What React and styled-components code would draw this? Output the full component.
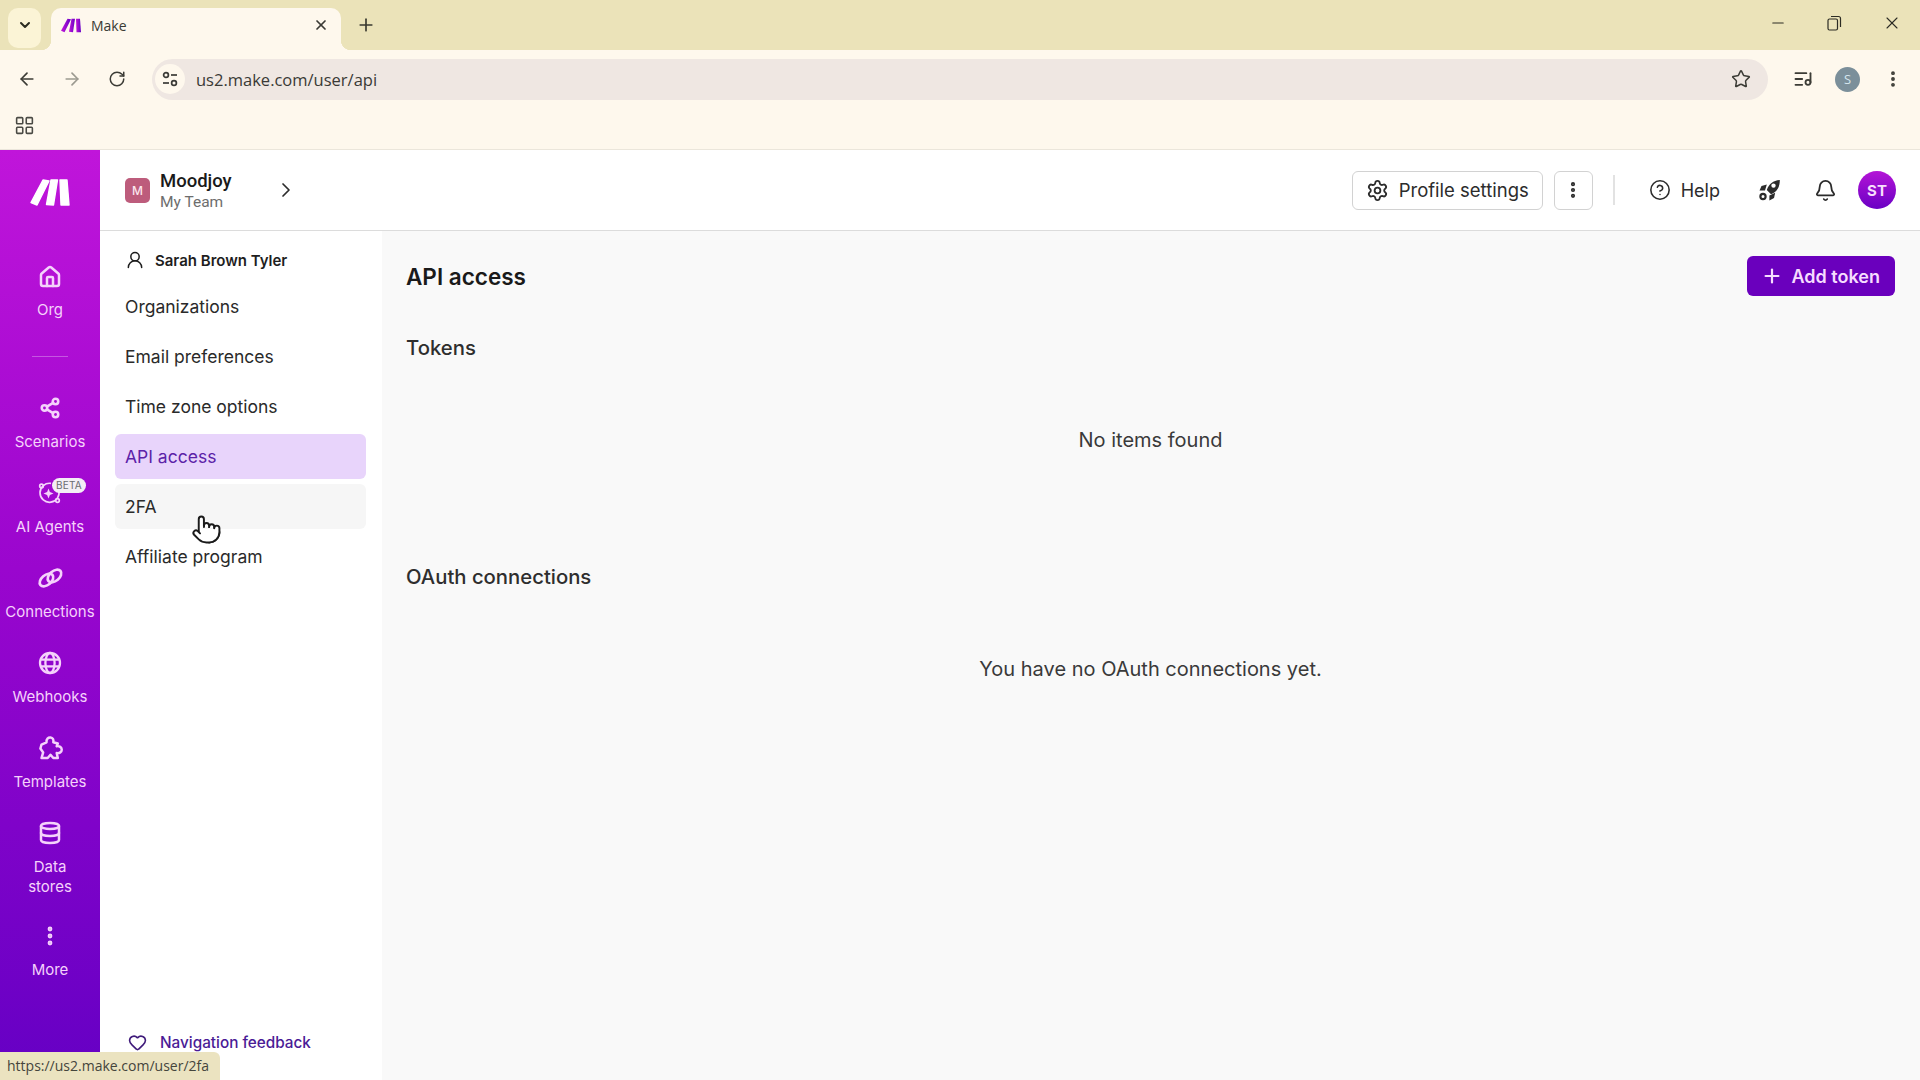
import React from 'react'
import styled, { createGlobalStyle } from 'styled-components'
import {
  ArrowLeft,
  ArrowRight,
  Bell,
  ChevronDown,
  ChevronRight,
  CircleHelp,
  Database,
  EllipsisVertical,
  Heart,
  House,
  LayoutGrid,
  ListMusic,
  Minus,
  Plus,
  Pointer,
  RotateCw,
  Settings,
  Share2,
  Star,
  UserRound,
  X,
} from 'lucide-react'

const GlobalStyle = createGlobalStyle`
  html, body {
    margin: 0;
    padding: 0;
    background: #fff;
  }
  body {
    font-family: Inter, "Liberation Sans", sans-serif;
    color: #1c1c1c;
  }
  * {
    box-sizing: border-box;
  }
`

const Screen = styled.div`
  position: relative;
  display: flex;
  flex-direction: column;
  width: 100%;
  height: 100vh;
  overflow: hidden;
`

const TabStrip = styled.div`
  display: flex;
  flex: none;
  height: 50px;
  padding-left: 8px;
  background: #ebe3b9;
`

const TabListButton = styled.div`
  display: flex;
  align-items: center;
  justify-content: center;
  width: 33px;
  height: 40px;
  margin-top: 8px;
  padding-bottom: 6px;
  border-radius: 10px;
  background: #fbf4d6;
  color: #2b2b20;
`

const Tab = styled.div`
  position: relative;
  display: flex;
  align-items: center;
  width: 290px;
  height: 42px;
  margin: 8px 0 0 10px;
  padding: 0 12px 8px 10px;
  border-radius: 10px 10px 0 0;
  background: #fef8ed;
  font-family: "Open Sans", sans-serif;
  font-size: 14px;
  color: #3a3a34;

  &::before,
  &::after {
    content: '';
    position: absolute;
    bottom: 0;
    width: 10px;
    height: 10px;
  }
  &::before {
    left: -10px;
    background: radial-gradient(circle at 0 0, #ebe3b9 10px, #fef8ed 10.5px);
  }
  &::after {
    right: -10px;
    background: radial-gradient(circle at 100% 0, #ebe3b9 10px, #fef8ed 10.5px);
  }
`

const TabTitle = styled.span`
  flex: 1;
  margin-left: 10px;
`

const NewTab = styled.div`
  display: flex;
  align-items: center;
  justify-content: center;
  width: 30px;
  height: 42px;
  margin: 4px 0 0 10px;
  color: #3a3a30;
`

const WindowControls = styled.div`
  display: flex;
  margin-left: auto;
  color: #2c2c24;
`

const WindowButton = styled.div`
  display: flex;
  align-items: center;
  justify-content: center;
  width: 57px;
  height: 46px;
`

const Toolbar = styled.div`
  display: flex;
  flex: none;
  align-items: center;
  height: 58px;
  padding: 0 5px 0 10px;
  background: #fef8ed;
`

const NavButton = styled.div`
  display: flex;
  align-items: center;
  justify-content: center;
  width: 34px;
  height: 34px;
  margin-right: 11px;
  color: ${(p) => (p.$dim ? '#9c9a90' : '#3c3c36')};
`

const Omnibox = styled.div`
  display: flex;
  flex: 1;
  align-items: center;
  height: 41px;
  margin: 0 12px 0 7px;
  padding: 0 17px 0 3px;
  border-radius: 21px;
  background: #efe7e2;
  font-family: "Open Sans", sans-serif;
  font-size: 16.5px;
  color: #3a3a36;
`

const SiteInfo = styled.div`
  display: flex;
  flex: none;
  align-items: center;
  justify-content: center;
  width: 30px;
  height: 30px;
  margin-right: 11px;
  border-radius: 50%;
  background: #fef8ed;
`

const UrlText = styled.span`
  flex: 1;
`

const ToolbarCell = styled.div`
  display: flex;
  align-items: center;
  justify-content: center;
  width: 45px;
  color: #3c3c36;
`

const ChromeAvatar = styled.div`
  display: flex;
  align-items: center;
  justify-content: center;
  width: 25px;
  height: 25px;
  border-radius: 50%;
  background: #7b8f9a;
  font-family: "Open Sans", sans-serif;
  font-size: 13px;
  color: #d5e6ee;
`

const BookmarkBar = styled.div`
  display: flex;
  flex: none;
  align-items: center;
  height: 42px;
  padding: 0 0 6px 14px;
  background: #fef8ed;
  border-bottom: 1px solid #ebe6db;
  color: #4a4a44;
`

const AppFrame = styled.div`
  display: flex;
  flex: 1;
  min-height: 0;
`

const Rail = styled.nav`
  display: flex;
  flex: none;
  flex-direction: column;
  align-items: center;
  width: 100px;
  background: linear-gradient(180deg, #c015da 0%, #9a06ce 45%, #6500c4 100%);
  color: #f5d2fb;
`

const RailLogo = styled.div`
  display: flex;
  flex: none;
  align-items: center;
  justify-content: center;
  height: 80px;
  width: 100%;
  margin-bottom: 34px;
  padding-top: 4px;
`

const RailItem = styled.div`
  display: flex;
  flex-direction: column;
  align-items: center;
  width: 100%;
  margin-bottom: ${(p) => p.$gap}px;
`

const RailIcon = styled.div`
  position: relative;
  display: flex;
  align-items: center;
  justify-content: center;
  height: 26px;
  margin-bottom: ${(p) => (p.$tight ? 10 : 11)}px;
`

const RailLabel = styled.span`
  width: ${(p) => (p.$narrow ? 60 : 90)}px;
  font-size: 15px;
  line-height: 20px;
  text-align: center;
`

const RailDivider = styled.div`
  flex: none;
  width: 36px;
  height: 1px;
  margin: 36px 0 38px;
  background: rgba(255, 255, 255, 0.3);
`

const BetaBadge = styled.span`
  position: absolute;
  top: -2px;
  left: 15px;
  padding: 1px 4px;
  border-radius: 8px;
  background: #f3eef5;
  font-size: 10px;
  line-height: 13px;
  letter-spacing: 0.2px;
  color: #6b6b70;
`

const Body = styled.div`
  display: flex;
  flex: 1;
  flex-direction: column;
  min-width: 0;
`

const PageHeader = styled.header`
  display: flex;
  flex: none;
  align-items: center;
  height: 81px;
  padding: 0 24px 0 25px;
  background: #fff;
  border-bottom: 1px solid #dcdcdc;
`

const TeamAvatar = styled.div`
  display: flex;
  flex: none;
  align-items: center;
  justify-content: center;
  width: 25px;
  height: 25px;
  margin-right: 10px;
  border-radius: 5px;
  background: #bd5c7c;
  font-size: 12px;
  font-weight: 500;
  color: #fbe6ee;
`

const TeamText = styled.div`
  display: flex;
  flex-direction: column;
  width: 106px;
  margin: 2px 8px 0 0;
`

const TeamName = styled.span`
  font-family: Roboto, sans-serif;
  font-size: 18.5px;
  line-height: 22px;
  font-weight: 500;
  color: #1a1a1a;
`

const TeamSub = styled.span`
  font-family: Roboto, sans-serif;
  font-size: 15.5px;
  line-height: 20px;
  color: #6d6d6d;
`

const HeaderActions = styled.div`
  display: flex;
  align-items: center;
  margin-left: auto;
`

const OutlineButton = styled.div`
  display: flex;
  align-items: center;
  justify-content: center;
  gap: 10px;
  width: ${(p) => p.$width}px;
  height: 39px;
  margin-right: 11px;
  border: 1px solid #d2d2d2;
  border-radius: 6px;
  background: #fff;
  font-size: 18.5px;
  color: #2c2c2c;
`

const HeaderDivider = styled.div`
  width: 2px;
  height: 30px;
  margin: 0 34px 0 9px;
  background: #e2e2e2;
`

const HelpLink = styled.div`
  display: flex;
  align-items: center;
  gap: 10px;
  margin-right: 38px;
  font-size: 18px;
  color: #2c2c2c;
`

const HeaderIcon = styled.div`
  display: flex;
  align-items: center;
  justify-content: center;
  width: 24px;
  margin-right: ${(p) => p.$gap}px;
  color: #2b2b2b;
`

const UserAvatar = styled.div`
  display: flex;
  align-items: center;
  justify-content: center;
  width: 38px;
  height: 38px;
  border-radius: 50%;
  background: linear-gradient(180deg, #b414d6, #6a00c4);
  font-size: 15px;
  font-weight: 700;
  color: #f7ddfc;
`

const Columns = styled.div`
  display: flex;
  flex: 1;
  min-height: 0;
`

const SubNav = styled.aside`
  display: flex;
  flex: none;
  flex-direction: column;
  width: 282px;
  padding: 0 16px 0 15px;
  background: #fff;
`

const SubNavUser = styled.div`
  display: flex;
  align-items: center;
  gap: 10px;
  height: 53px;
  padding: 5px 0 0 10px;
  font-size: 15px;
  font-weight: 600;
  color: #1e1e1e;
`

const SubNavList = styled.div`
  display: flex;
  flex-direction: column;
  gap: 5px;
`

const SubNavItem = styled.div`
  display: flex;
  align-items: center;
  height: 45px;
  padding-left: 10px;
  border-radius: 6px;
  font-size: 17.5px;
  background: ${(p) => (p.$active ? '#e8d4fb' : p.$hover ? '#f6f6f6' : 'transparent')};
  color: ${(p) => (p.$active ? '#5c22a8' : '#2a2a2a')};
`

const FeedbackLink = styled.div`
  display: flex;
  align-items: center;
  gap: 13px;
  margin-top: auto;
  height: 38px;
  margin-bottom: 19px;
  padding-left: 13px;
  font-size: 15.3px;
  font-weight: 500;
  color: #4a1b96;
`

const Main = styled.main`
  flex: 1;
  min-width: 0;
  padding: 25px 25px 0 24px;
  background: #f9f9f9;
`

const TitleRow = styled.div`
  display: flex;
  align-items: center;
  justify-content: space-between;
  height: 40px;
  margin-bottom: 37px;
`

const PageTitle = styled.h1`
  margin: 0;
  font-size: 22.5px;
  font-weight: 600;
  color: #1a1a1a;
`

const AddButton = styled.div`
  display: flex;
  align-items: center;
  gap: 9px;
  height: 40px;
  padding: 0 15px 0 14px;
  border-radius: 6px;
  background: #6a00bd;
  font-size: 18px;
  font-weight: 600;
  color: #f6dcff;
`

const SectionTitle = styled.h2`
  margin: 0;
  font-size: 20.3px;
  line-height: 30px;
  font-weight: 500;
  color: #2e2e2e;
`

const EmptyNote = styled.p`
  margin: 0;
  padding: 62px 0 107px;
  font-size: 20px;
  line-height: 30px;
  text-align: center;
  color: #3a3a3a;
`

const StatusBubble = styled.div`
  position: absolute;
  left: 0;
  bottom: 0;
  width: 220px;
  height: 28px;
  padding: 4px 0 0 7px;
  border-top-right-radius: 6px;
  background: #ebe3c0;
  font-family: "Open Sans", sans-serif;
  font-size: 14px;
  line-height: 20px;
  color: #45453c;
`

const HandCursor = styled.div`
  position: absolute;
  left: 191px;
  top: 514px;
  color: #1a1a1a;
`

const MakeLogo = ({ width, height, fill = '#fff' }) => (
  <svg width={width} height={height} viewBox="0 0 40 27">
    <g fill={fill} stroke={fill} strokeWidth="1.4" strokeLinejoin="round">
      <polygon points="13,1 19,2 7,26 1,23.5" />
      <polygon points="21,1 27.5,1 23.5,26 16.5,25.5" />
      <polygon points="30,1 37,1 39,26 31,26" />
    </g>
  </svg>
)

const TabFavicon = () => (
  <svg width="20" height="15" viewBox="0 0 40 27">
    <defs>
      <linearGradient id="fav" x1="0" y1="0" x2="1" y2="0">
        <stop offset="0" stopColor="#c415da" />
        <stop offset="1" stopColor="#6500c4" />
      </linearGradient>
    </defs>
    <g fill="url(#fav)">
      <polygon points="13,0 20,1 7,27 0,24" />
      <polygon points="21,0 28,0 24,27 16,26" />
      <polygon points="30,0 38,0 40,27 31,27" />
    </g>
  </svg>
)

const TuneIcon = () => (
  <svg width="18" height="18" viewBox="0 0 18 18" fill="none" stroke="#3a3a36" strokeWidth="1.7">
    <circle cx="5" cy="5" r="2.4" />
    <line x1="10" y1="5" x2="16" y2="5" />
    <line x1="2" y1="13" x2="8" y2="13" />
    <circle cx="13" cy="13" r="2.4" />
  </svg>
)

const RestoreIcon = () => (
  <svg width="15" height="16" viewBox="0 0 15 16" fill="none" stroke="#2c2c24" strokeWidth="1.2">
    <rect x="1" y="4" width="9.5" height="11" rx="1.5" />
    <path d="M4 1.5h7.5A2 2 0 0 1 13.5 3.5v8.5" />
  </svg>
)

const AgentIcon = () => (
  <svg width="26" height="26" viewBox="0 0 26 26" fill="none" stroke="currentColor" strokeWidth="1.7">
    <path d="M21.6 10a9.5 9.5 0 1 1-7.6-6.6" />
    <circle cx="4.5" cy="6" r="1.8" />
    <circle cx="20.5" cy="20.5" r="1.8" />
    <path
      d="M11.5 8.5l1.4 3.6 3.6 1.4-3.6 1.4-1.4 3.6-1.4-3.6-3.6-1.4 3.6-1.4z"
      fill="currentColor"
      stroke="none"
    />
  </svg>
)

const ConnectionsIcon = () => (
  <svg width="27" height="22" viewBox="0 0 27 22" fill="none" stroke="currentColor" strokeWidth="2.7">
    <ellipse cx="9.5" cy="13" rx="7.8" ry="5" transform="rotate(-40 9.5 13)" />
    <ellipse cx="17.5" cy="9" rx="7.8" ry="5" transform="rotate(-40 17.5 9)" />
  </svg>
)

const GlobeIcon = () => (
  <svg width="24" height="24" viewBox="0 0 24 24" fill="none" stroke="currentColor" strokeWidth="2.3">
    <circle cx="12" cy="12" r="10" />
    <ellipse cx="12" cy="12" rx="4.6" ry="10" />
    <line x1="2.8" y1="8.6" x2="21.2" y2="8.6" />
    <line x1="2.8" y1="15.4" x2="21.2" y2="15.4" />
  </svg>
)

const TemplateIcon = () => (
  <svg
    width="27"
    height="27"
    viewBox="0 0 24 24"
    fill="none"
    stroke="currentColor"
    strokeWidth="2.2"
    strokeLinejoin="round"
  >
    <path d="M8.5 6.5C8 3.5 10 2 12 2.2 14 2.4 15 4 14.5 6.5L18.5 7.5 17.5 10C20 9.5 22 11 22 13 22 15 20 16.5 17.5 16L18.5 20.5H14.5L12 17.5 9.5 20.5H4L5.5 15.5 3 12 4 8.5Z" />
  </svg>
)

const RocketIcon = () => (
  <svg width="28" height="28" viewBox="0 0 24 24" fill="currentColor">
    <path
      fillRule="evenodd"
      d="M21.8 2C15 2.5 11 6 8.8 12L13 16.2C19.3 13.7 21.8 9 21.8 2ZM15.5 5.4a2.2 2.2 0 1 1 0 4.4 2.2 2.2 0 0 1 0-4.4Z"
    />
    <path d="M8.8 6.5 3.5 8 1.5 12.5H7Z" />
    <path d="M17.2 14.8 16 20l-4.6 2.5v-5Z" />
    <circle cx="5" cy="18.5" r="2.6" fill="none" stroke="currentColor" strokeWidth="2.2" />
  </svg>
)

const railItems = [
  { label: 'Scenarios', icon: <Share2 size={22} strokeWidth={2.8} />, gap: 28 },
  {
    label: 'AI Agents',
    icon: <AgentIcon />,
    badge: 'BETA',
    gap: 28,
  },
  { label: 'Connections', icon: <ConnectionsIcon />, gap: 28 },
  { label: 'Webhooks', icon: <GlobeIcon />, gap: 28 },
  { label: 'Templates', icon: <TemplateIcon />, gap: 28 },
  { label: 'Data stores', icon: <Database size={24} strokeWidth={2.5} />, narrow: true, gap: 26 },
  { label: 'More', icon: <EllipsisVertical size={24} strokeWidth={2.8} />, gap: 0 },
]

const subNavItems = [
  'Organizations',
  'Email preferences',
  'Time zone options',
  'API access',
  '2FA',
  'Affiliate program',
]

const App = () => (
  <Screen>
    <GlobalStyle />
    <TabStrip>
      <TabListButton>
        <ChevronDown size={16} strokeWidth={3} />
      </TabListButton>
      <Tab>
        <TabFavicon />
        <TabTitle>Make</TabTitle>
        <X size={16} strokeWidth={2.6} />
      </Tab>
      <NewTab>
        <Plus size={20} strokeWidth={2} />
      </NewTab>
      <WindowControls>
        <WindowButton>
          <Minus size={18} strokeWidth={1.4} />
        </WindowButton>
        <WindowButton>
          <RestoreIcon />
        </WindowButton>
        <WindowButton>
          <X size={20} strokeWidth={1.3} />
        </WindowButton>
      </WindowControls>
    </TabStrip>
    <Toolbar>
      <NavButton>
        <ArrowLeft size={20} />
      </NavButton>
      <NavButton $dim>
        <ArrowRight size={20} />
      </NavButton>
      <NavButton>
        <RotateCw size={18} />
      </NavButton>
      <Omnibox>
        <SiteInfo>
          <TuneIcon />
        </SiteInfo>
        <UrlText>us2.make.com/user/api</UrlText>
        <Star size={20} strokeWidth={1.8} color="#3c3c36" />
      </Omnibox>
      <ToolbarCell>
        <ListMusic size={20} strokeWidth={2.2} />
      </ToolbarCell>
      <ToolbarCell>
        <ChromeAvatar>S</ChromeAvatar>
      </ToolbarCell>
      <ToolbarCell>
        <EllipsisVertical size={20} strokeWidth={2.6} />
      </ToolbarCell>
    </Toolbar>
    <BookmarkBar>
      <LayoutGrid size={21} strokeWidth={1.8} />
    </BookmarkBar>
    <AppFrame>
      <Rail>
        <RailLogo>
          <MakeLogo width={40} height={27} />
        </RailLogo>
        <RailItem $gap={0}>
          <RailIcon $tight>
            <House size={24} strokeWidth={2.5} />
          </RailIcon>
          <RailLabel>Org</RailLabel>
        </RailItem>
        <RailDivider />
        {railItems.map((item) => (
          <RailItem key={item.label} $gap={item.gap}>
            <RailIcon>
              {item.icon}
              {item.badge && <BetaBadge>{item.badge}</BetaBadge>}
            </RailIcon>
            <RailLabel $narrow={item.narrow}>{item.label}</RailLabel>
          </RailItem>
        ))}
      </Rail>
      <Body>
        <PageHeader>
          <TeamAvatar>M</TeamAvatar>
          <TeamText>
            <TeamName>Moodjoy</TeamName>
            <TeamSub>My Team</TeamSub>
          </TeamText>
          <ChevronRight size={24} strokeWidth={1.7} color="#2c2c2c" />
          <HeaderActions>
            <OutlineButton $width={191}>
              <Settings size={23} strokeWidth={1.9} />
              Profile settings
            </OutlineButton>
            <OutlineButton $width={39}>
              <EllipsisVertical size={20} strokeWidth={3} />
            </OutlineButton>
            <HeaderDivider />
            <HelpLink>
              <CircleHelp size={22} strokeWidth={1.7} />
              Help
            </HelpLink>
            <HeaderIcon $gap={31}>
              <RocketIcon />
            </HeaderIcon>
            <HeaderIcon $gap={21}>
              <Bell size={23} strokeWidth={1.9} />
            </HeaderIcon>
            <UserAvatar>ST</UserAvatar>
          </HeaderActions>
        </PageHeader>
        <Columns>
          <SubNav>
            <SubNavUser>
              <UserRound size={20} strokeWidth={1.8} />
              Sarah Brown Tyler
            </SubNavUser>
            <SubNavList>
              {subNavItems.map((item) => (
                <SubNavItem
                  key={item}
                  $active={item === 'API access'}
                  $hover={item === '2FA'}
                >
                  {item}
                </SubNavItem>
              ))}
            </SubNavList>
            <FeedbackLink>
              <Heart size={19} strokeWidth={2} color="#3f1a7a" />
              Navigation feedback
            </FeedbackLink>
          </SubNav>
          <Main>
            <TitleRow>
              <PageTitle>API access</PageTitle>
              <AddButton>
                <Plus size={22} strokeWidth={2.4} />
                Add token
              </AddButton>
            </TitleRow>
            <section>
              <SectionTitle>Tokens</SectionTitle>
              <EmptyNote>No items found</EmptyNote>
            </section>
            <section>
              <SectionTitle>OAuth connections</SectionTitle>
              <EmptyNote>You have no OAuth connections yet.</EmptyNote>
            </section>
          </Main>
        </Columns>
      </Body>
    </AppFrame>
    <HandCursor>
      <Pointer size={31} strokeWidth={1.5} fill="#fff" />
    </HandCursor>
    <StatusBubble>https://us2.make.com/user/2fa</StatusBubble>
  </Screen>
)

export default App
